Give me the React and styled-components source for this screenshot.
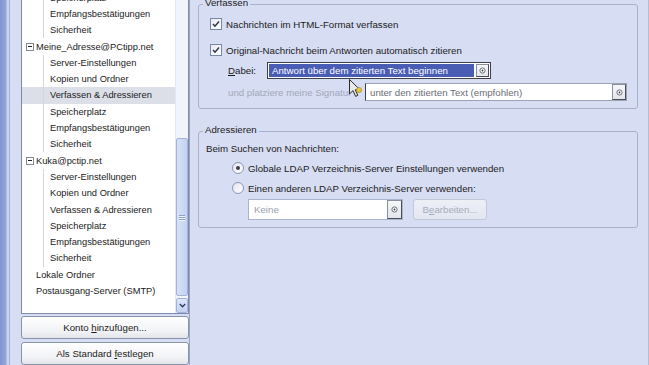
import React from "react";
import styled, { createGlobalStyle } from "styled-components";

const GlobalStyle = createGlobalStyle`
  html, body { margin: 0; padding: 0; width: 649px; height: 365px; overflow: hidden; background: #d7ddf3; }
  body { font-family: "Liberation Sans", Arial, sans-serif; font-size: 9.7px; color: #1b1b1b; }
  * { box-sizing: border-box; }
`;

const Window = styled.div`
  display: flex;
  width: 649px;
  height: 365px;
  background: #d7ddf3;
`;

const Edge = styled.div`
  width: 10px;
  flex: none;
  background: linear-gradient(to right, #7f94cf 0, #93a7dd 6px, #c9d3f1 7px, #c9d3f1 9px, #a9b5d8 9px);
`;

const LeftPane = styled.div`
  width: 179px;
  flex: none;
  padding-left: 11px;
  display: flex;
  flex-direction: column;
`;

const TreeBox = styled.div`
  height: 314px;
  display: flex;
  border: 1px solid #7f8aa6;
  border-top: none;
  background: #fff;
  overflow: hidden;
`;

const TreeList = styled.div`
  flex: 1;
  overflow: hidden;
  font-size: 9.3px;
`;

const TreeScroll = styled.div`
  margin-top: -10.5px;
`;

const Row = styled.div`
  height: 16.3px;
  display: flex;
  align-items: center;
  white-space: nowrap;
  padding-left: ${(p) => p.$indent}px;
  background-color: ${(p) => (p.$selected ? "#dcdfe8" : "transparent")};
  background-image: ${(p) =>
    p.$child
      ? "linear-gradient(to right, transparent 21px, #d4d6dc 21px, #d4d6dc 22px, transparent 22px)"
      : "none"};
`;

const Expander = styled.span`
  width: 8px;
  height: 8px;
  border: 1px solid #85888f;
  margin-right: 2px;
  display: flex;
  align-items: center;
  justify-content: center;
  background: #fff;
  &::after {
    content: "";
    width: 4px;
    height: 1px;
    background: #222;
  }
`;

const Scrollbar = styled.div`
  width: 13px;
  flex: none;
  display: flex;
  flex-direction: column;
  background: #f2f4fb;
  border-left: 1px solid #e3e7f3;
`;

const Track = styled.div`
  flex: 1;
  display: flex;
  flex-direction: column;
`;

const Thumb = styled.div`
  margin: ${(p) => p.$offset}px 0 0 0;
  height: ${(p) => p.$size}px;
  border: 1px solid #a3b2db;
  border-radius: 2px;
  background: linear-gradient(to right, #d7e0f7, #c4d1f1);
  display: flex;
  flex-direction: column;
  align-items: center;
  justify-content: center;
  gap: 1px;
`;

const Grip = styled.span`
  width: 6px;
  height: 1px;
  background: #8d9ecb;
  box-shadow: 0 1px 0 #eef2fc;
`;

const ArrowButton = styled.div`
  height: 15px;
  border: 1px solid #a3b2db;
  border-radius: 2px;
  background: linear-gradient(to bottom, #dfe6f9, #c4d1f1);
  display: flex;
  align-items: center;
  justify-content: center;
`;

const PaneButton = styled.div`
  height: 23px;
  margin-top: ${(p) => p.$gap}px;
  border: 1px solid #8893ad;
  border-radius: 3px;
  background: linear-gradient(to bottom, #ffffff, #f1f2f5 70%, #e2e4ea);
  display: flex;
  align-items: center;
  justify-content: center;
  font-size: 9.7px;
  color: #1b1b1b;
`;

const U = styled.span`
  text-decoration: underline;
`;

const Main = styled.div`
  flex: 1;
  border-left: 1px solid #9aa3c0;
  border-right: 1px solid #b4bcd6;
  padding: 0 10px 0 8px;
  display: flex;
  flex-direction: column;
`;

const RightEdge = styled.div`
  width: 4px;
  flex: none;
  background: #dde2f5;
`;

const GroupBox = styled.div`
  position: relative;
  margin-top: ${(p) => p.$top}px;
  border: 1px solid #a9b2cd;
  border-radius: 3px;
  padding: ${(p) => p.$pad};
  display: flex;
  flex-direction: column;
`;

const Legend = styled.span`
  position: absolute;
  top: -8px;
  left: 4px;
  padding: 0 2px;
  line-height: 12px;
  background: #d7ddf3;
  color: #1b1b1b;
`;

const OptionRow = styled.div`
  display: flex;
  align-items: center;
  height: ${(p) => p.$h || 14}px;
  margin-top: ${(p) => p.$mt || 0}px;
  padding-left: ${(p) => p.$indent || 0}px;
  white-space: nowrap;
  position: relative;
`;

const CheckBox = styled.span`
  width: 12px;
  height: 12px;
  flex: none;
  margin-right: 4px;
  border: 1px solid #7887a6;
  background: linear-gradient(135deg, #e9ebf1, #ffffff);
  display: flex;
  align-items: center;
  justify-content: center;
`;

const Radio = styled.span`
  width: 12px;
  height: 12px;
  flex: none;
  margin-right: 4px;
  border: 1px solid #8a97b4;
  border-radius: 50%;
  background: linear-gradient(135deg, #e3e6ee, #ffffff);
  display: flex;
  align-items: center;
  justify-content: center;
  &::after {
    content: "";
    width: 4px;
    height: 4px;
    border-radius: 50%;
    background: ${(p) => (p.$checked ? "#3c3f48" : "transparent")};
  }
`;

const Label = styled.span`
  width: ${(p) => (p.$w ? `${p.$w}px` : "auto")};
  flex: none;
  color: ${(p) => (p.$disabled ? "#a2a8ba" : "#1b1b1b")};
`;

const Select = styled.div`
  width: ${(p) => p.$w}px;
  height: ${(p) => p.$h}px;
  flex: none;
  display: flex;
  align-items: stretch;
  background: #fff;
  border: 1px solid ${(p) => p.$border};
  border-left-color: ${(p) => p.$leftBorder || p.$border};
  padding: ${(p) => (p.$focused ? "1px" : "0")};
`;

const SelectValue = styled.span`
  flex: 1;
  display: flex;
  align-items: center;
  padding-left: ${(p) => p.$pl}px;
  background: ${(p) => (p.$highlight ? "#4a5db5" : "transparent")};
  color: ${(p) => p.$color};
  margin-right: ${(p) => (p.$highlight ? 2 : 0)}px;
  white-space: nowrap;
  overflow: hidden;
`;

const SelectButton = styled.span`
  width: ${(p) => p.$w}px;
  flex: none;
  border: 1px solid #8a8f9c;
  border-right-color: #4a4d55;
  border-bottom-color: #4a4d55;
  background: linear-gradient(to bottom, #f6f7fa, #e2e5ec);
  display: flex;
  align-items: center;
  justify-content: center;
`;

const DisabledButton = styled.div`
  width: 74px;
  height: 21px;
  margin-left: 10px;
  border: 1px solid #c2c8d8;
  border-radius: 3px;
  background: linear-gradient(to bottom, #eef0f6, #e2e6f1);
  color: #a6abbb;
  display: flex;
  align-items: center;
  justify-content: center;
`;

const Cursor = styled.svg`
  position: absolute;
  left: 139px;
  top: -4px;
  overflow: visible;
`;

const SpinIcon = () => (
  <svg width="7" height="7" viewBox="0 0 7 7">
    <circle cx="3.5" cy="3.5" r="2.6" fill="#fff" stroke="#5b5f68" strokeWidth="0.9" />
    <circle cx="3.5" cy="3.5" r="0.9" fill="#3a3d44" />
  </svg>
);

const CheckMark = () => (
  <svg width="8" height="8" viewBox="0 0 8 8">
    <path d="M1 4 L3 6.2 L7 1.5" fill="none" stroke="#2c3650" strokeWidth="1.5" />
  </svg>
);

const tree = [
  { t: "Speicherplatz", k: "c" },
  { t: "Empfangsbestätigungen", k: "c" },
  { t: "Sicherheit", k: "c" },
  { t: "Meine_Adresse@PCtipp.net", k: "a" },
  { t: "Server-Einstellungen", k: "c" },
  { t: "Kopien und Ordner", k: "c" },
  { t: "Verfassen & Adressieren", k: "c", sel: true },
  { t: "Speicherplatz", k: "c" },
  { t: "Empfangsbestätigungen", k: "c" },
  { t: "Sicherheit", k: "c" },
  { t: "Kuka@pctip.net", k: "a" },
  { t: "Server-Einstellungen", k: "c" },
  { t: "Kopien und Ordner", k: "c" },
  { t: "Verfassen & Adressieren", k: "c" },
  { t: "Speicherplatz", k: "c" },
  { t: "Empfangsbestätigungen", k: "c" },
  { t: "Sicherheit", k: "c" },
  { t: "Lokale Ordner", k: "l" },
  { t: "Postausgang-Server (SMTP)", k: "l" },
];

export default function App() {
  return (
    <Window>
      <GlobalStyle />
      <Edge />
      <LeftPane>
        <TreeBox>
          <TreeList>
            <TreeScroll>
              {tree.map((r, i) => (
                <Row
                  key={i}
                  $indent={r.k === "a" ? 4 : r.k === "l" ? 14 : 28}
                  $child={r.k === "c"}
                  $selected={r.sel}
                >
                  {r.k === "a" && <Expander />}
                  {r.t}
                </Row>
              ))}
            </TreeScroll>
          </TreeList>
          <Scrollbar>
            <Track>
              <Thumb $offset={138} $size={158}>
                <Grip />
                <Grip />
                <Grip />
              </Thumb>
            </Track>
            <ArrowButton>
              <svg width="7" height="5" viewBox="0 0 7 5">
                <path d="M0.8 1 L3.5 3.7 L6.2 1" fill="none" stroke="#2f3b5e" strokeWidth="1.4" />
              </svg>
            </ArrowButton>
          </Scrollbar>
        </TreeBox>
        <PaneButton $gap={2}>
          <span>
            Konto <U>h</U>inzufügen...
          </span>
        </PaneButton>
        <PaneButton $gap={3}>
          <span>
            Als Standard <U>f</U>estlegen
          </span>
        </PaneButton>
      </LeftPane>
      <Main>
        <GroupBox $top={4} $pad="12px 10px 7px 11px">
          <Legend>Verfassen</Legend>
          <OptionRow>
            <CheckBox>
              <CheckMark />
            </CheckBox>
            Nachrichten im HTML-Format verfassen
          </OptionRow>
          <OptionRow $mt={12}>
            <CheckBox>
              <CheckMark />
            </CheckBox>
            Original-Nachricht beim Antworten automatisch zitieren
          </OptionRow>
          <OptionRow $mt={5} $h={17} $indent={18}>
            <Label $w={39}>
              <U>D</U>abei:
            </Label>
            <Select $w={224} $h={17} $border="#3d4049" $focused>
              <SelectValue $highlight $pl={3} $color="#ffffff">
                Antwort über dem zitierten Text beginnen
              </SelectValue>
              <SelectButton $w={13}>
                <SpinIcon />
              </SelectButton>
            </Select>
          </OptionRow>
          <OptionRow $mt={4} $h={18} $indent={18}>
            <Label $w={137} $disabled>
              und platziere meine Signatur
            </Label>
            <Select $w={262} $h={18} $border="#9da3b2" $leftBorder="#3f424a">
              <SelectValue $pl={4} $color="#6a6d76">
                unter den zitierten Text (empfohlen)
              </SelectValue>
              <SelectButton $w={14}>
                <SpinIcon />
              </SelectButton>
            </Select>
            <Cursor width="14" height="20" viewBox="0 0 14 20">
              <path
                d="M0.5 0.5 L0.5 15 L4 11.6 L6.6 17.4 L8.8 16.4 L6.3 10.8 L11 10.8 Z"
                fill="#e8e8e8"
                stroke="#2a2a2a"
                strokeWidth="1"
              />
              <circle cx="10" cy="11" r="2.6" fill="#e8c53a" stroke="#9b7d1c" strokeWidth="0.6" />
            </Cursor>
          </OptionRow>
        </GroupBox>
        <GroupBox $top={22} $pad="9px 10px 7px 7px">
          <Legend>Adressieren</Legend>
          <OptionRow>Beim Suchen von Nachrichten:</OptionRow>
          <OptionRow $mt={6} $indent={26}>
            <Radio $checked />
            Globale LDAP Verzeichnis-Server Einstellungen verwenden
          </OptionRow>
          <OptionRow $mt={6} $indent={26}>
            <Radio />
            Einen anderen LDAP Verzeichnis-Server verwenden:
          </OptionRow>
          <OptionRow $mt={4} $h={21} $indent={42}>
            <Select $w={155} $h={21} $border="#a9b5cf">
              <SelectValue $pl={5} $color="#9ba0ae">
                Keine
              </SelectValue>
              <SelectButton $w={15}>
                <SpinIcon />
              </SelectButton>
            </Select>
            <DisabledButton>
              <span>
                B<U>e</U>arbeiten...
              </span>
            </DisabledButton>
          </OptionRow>
        </GroupBox>
      </Main>
      <RightEdge />
    </Window>
  );
}
